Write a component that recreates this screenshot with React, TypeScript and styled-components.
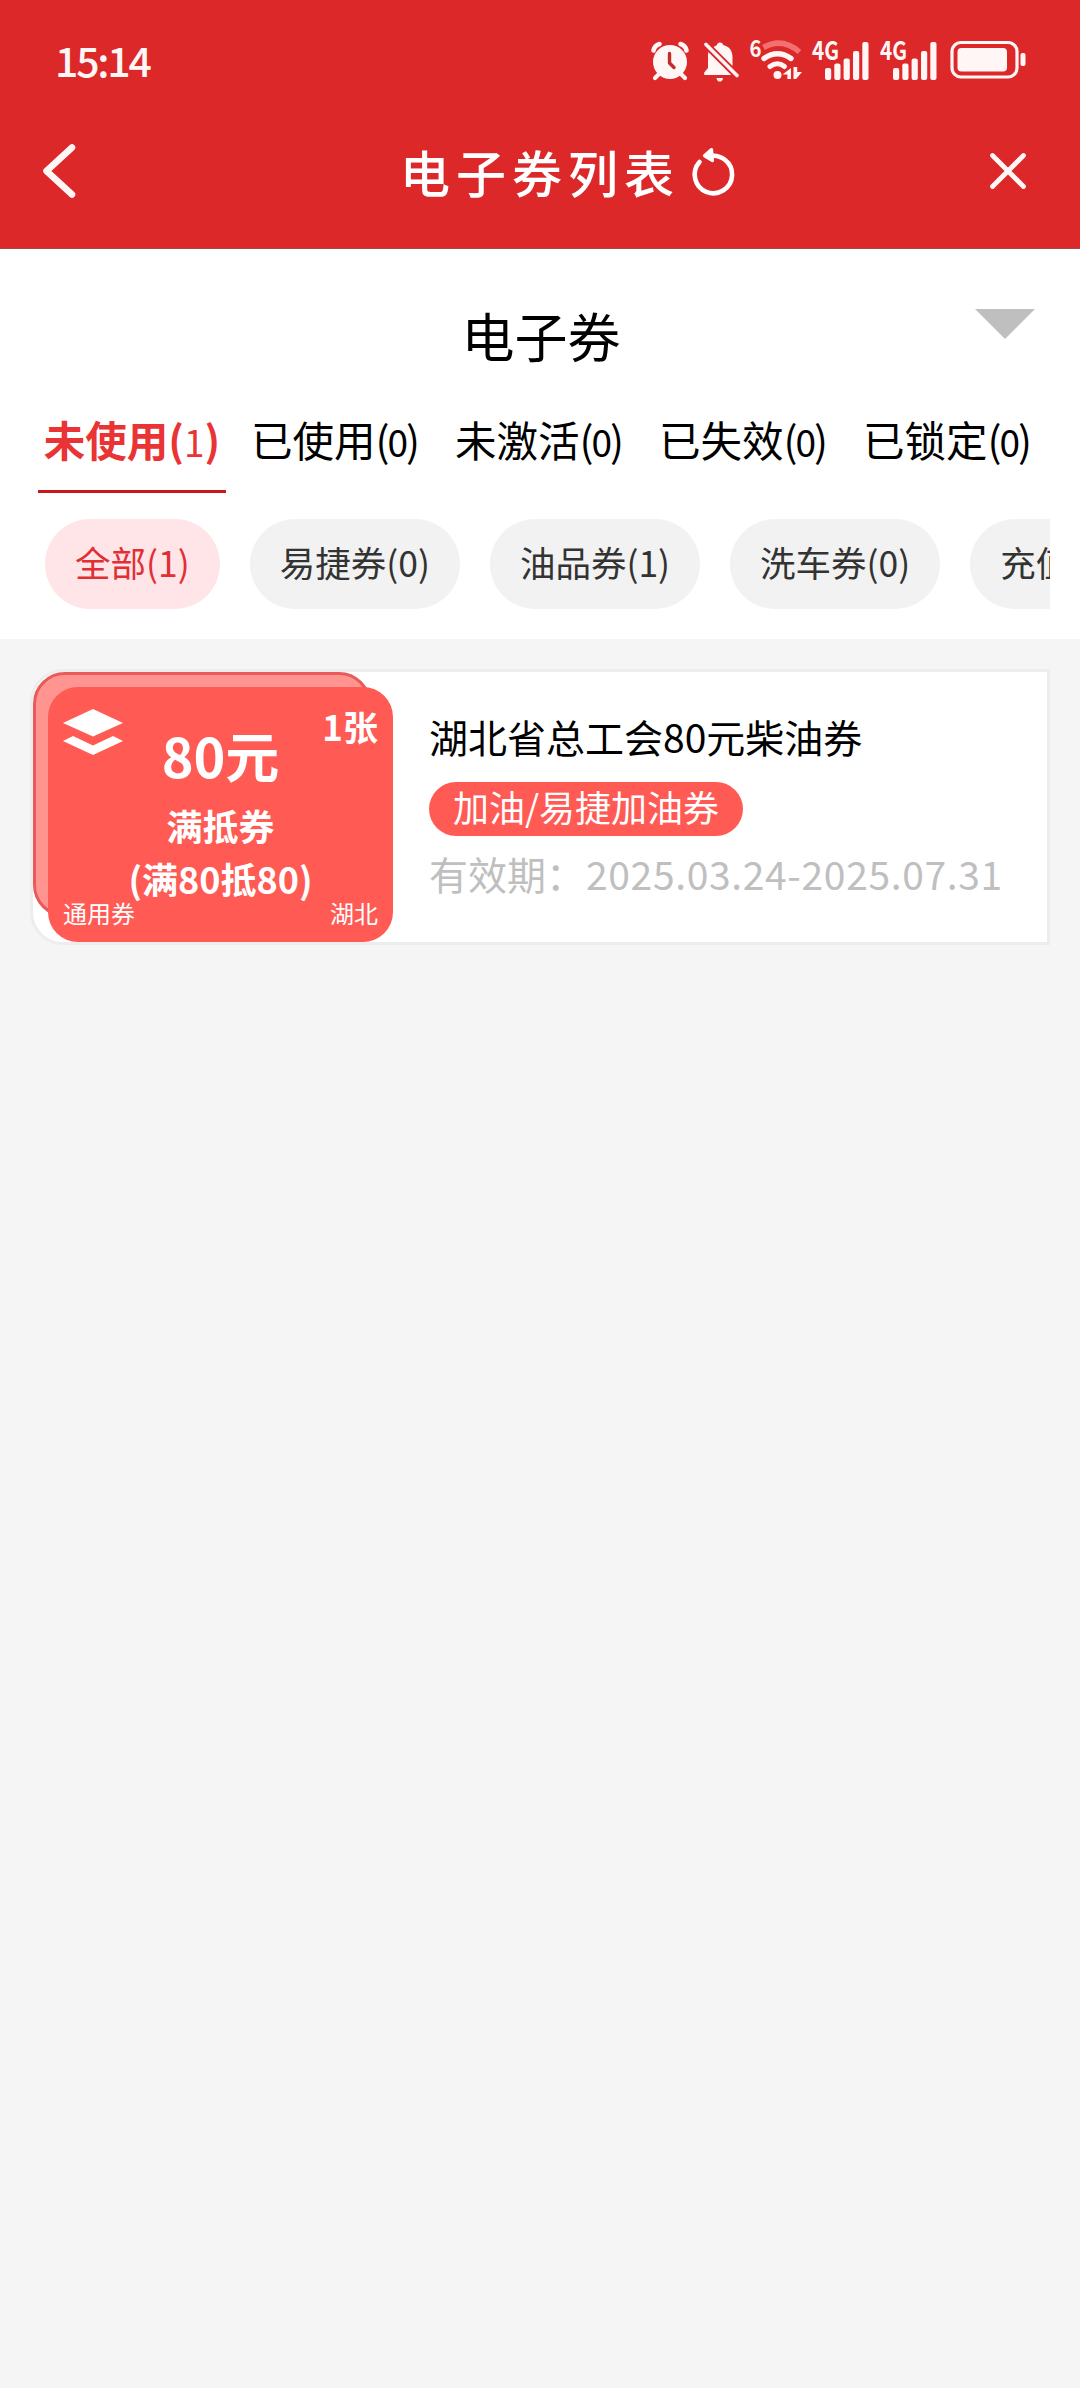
import React from "react";
import styled, { createGlobalStyle, css } from "styled-components";

const GlobalStyle = createGlobalStyle`
  * { box-sizing: border-box; }
  html, body { margin: 0; padding: 0; background: #f5f5f5; }
  body {
    font-family: "Noto Sans CJK SC", "Noto Sans", sans-serif;
    color: #000;
    -webkit-font-smoothing: antialiased;
  }
`;

const Page = styled.div`
  width: 1080px;
  min-height: 2388px;
  display: flex;
  flex-direction: column;
  background: #f5f5f5;
  overflow: hidden;
`;

const Header = styled.header`
  height: 249px;
  background: #dc2829;
  border-bottom: 1px solid #a5474a;
  color: #fff6f5;
  display: flex;
  flex-direction: column;
`;

const StatusBar = styled.div`
  height: 120px;
  padding: 2px 54px 0 55px;
  display: flex;
  align-items: center;
  justify-content: space-between;
`;

const Clock = styled.span`
  padding-bottom: 5px;
  font-size: 41px;
  line-height: 60px;
  font-weight: 500;
  letter-spacing: -2.2px;
`;

const StatusIcons = styled.div`
  display: flex;
  align-items: center;
`;

const Glyph = styled.svg<{ $w: number; $h: number; $ml?: number }>`
  display: block;
  flex: none;
  overflow: visible;
  width: ${(p) => p.$w}px;
  height: ${(p) => p.$h}px;
  margin-left: ${(p) => p.$ml ?? 0}px;
`;

const SignalText = styled.text`
  font-family: "Noto Sans CJK SC", sans-serif;
  font-weight: 700;
  fill: #fff6f5;
`;

const NavBar = styled.nav`
  height: 102px;
  padding: 0 53px 0 42px;
  display: grid;
  grid-template-columns: 120px 1fr 120px;
  align-items: center;
`;

const NavTitle = styled.h1`
  margin: 0;
  display: flex;
  align-items: center;
  justify-content: center;
  padding-left: 67px;
  font-family: KaiTi, STKaiti, "Noto Sans CJK SC", serif;
  font-size: 50px;
  line-height: 60px;
  font-weight: 500;
  letter-spacing: 6px;
  color: #fff;
`;

const NavEnd = styled.div`
  display: flex;
  justify-content: flex-end;
`;

const Filters = styled.section`
  height: 390px;
  background: #fff;
  display: flex;
  flex-direction: column;
`;

const Category = styled.div`
  height: 150px;
  padding: 22px 45px 0;
  display: grid;
  grid-template-columns: 60px 1fr 60px;
  align-items: center;
`;

const CategoryName = styled.h2`
  margin: 0;
  padding: 0 0 1px 2px;
  grid-column: 2;
  text-align: center;
  font-size: 53px;
  line-height: 64px;
  font-weight: 400;
`;

const Caret = styled.i`
  width: 0;
  height: 0;
  margin-bottom: 22px;
  border-left: 30px solid transparent;
  border-right: 30px solid transparent;
  border-top: 30px solid #bfbfbf;
`;

const Tabs = styled.div`
  height: 94px;
  padding-left: 38px;
  display: flex;
  gap: 35px;
`;

const Tab = styled.button<{ $active?: boolean }>`
  flex: none;
  width: 169px;
  height: 94px;
  padding: 0 0 12px;
  border: 0;
  background: none;
  font-family: inherit;
  font-size: 41.5px;
  line-height: 60px;
  color: #000;
  white-space: nowrap;
  ${(p) =>
    p.$active &&
    css`
      width: 188px;
      margin-right: -10px;
      padding-bottom: 9px;
      font-weight: 700;
      color: #e93334;
      border-bottom: 3px solid #c8171e;
    `}
`;

const Count = styled.span<{ $tight: boolean }>`
  margin: 0 ${(p) => (p.$tight ? -2 : 0)}px;
  font-size: 37px;
  font-weight: 400;
`;

const Pills = styled.div`
  margin: 26px 30px 0 45px;
  display: flex;
  gap: 30px;
  overflow: hidden;
`;

const Pill = styled.button<{ $active?: boolean }>`
  flex: none;
  height: 90px;
  padding: 0 30px 4px;
  border: 0;
  border-radius: 45px;
  font-family: inherit;
  font-size: 35.5px;
  line-height: 60px;
  white-space: nowrap;
  color: ${(p) => (p.$active ? "#e03036" : "#333")};
  background: ${(p) => (p.$active ? "#ffe5e7" : "#f2f2f2")};
`;

const List = styled.main`
  padding: 30px 30px 0;
`;

const Card = styled.article`
  height: 276px;
  border: 3px solid #ededed;
  border-radius: 33px 0 0 33px;
  background: #fff;
  display: flex;
`;

const Stack = styled.div`
  position: relative;
  width: 360px;
  height: 270px;
  padding: 15px 0 0 15px;
  flex: none;
`;

const StackShadow = styled.div`
  position: absolute;
  left: 0;
  top: 0;
  width: 338px;
  height: 245px;
  border: 3px solid #e95a5b;
  border-radius: 32px;
  background: #ff9490;
`;

const Coupon = styled.div`
  position: relative;
  width: 345px;
  height: 255px;
  padding: 15px 15px 0;
  border-radius: 30px;
  background: #ff5a53;
  color: #fff;
  display: grid;
  grid-template-rows: 97px 53px 49px 26px;
`;

const CouponTop = styled.div`
  display: grid;
  grid-template-columns: 60px 1fr 60px;
`;

const Amount = styled.strong`
  padding-top: 15px;
  text-align: center;
  font-size: 54px;
  line-height: 76px;
  font-weight: 700;
  white-space: nowrap;
`;

const Quantity = styled.strong`
  padding-top: 1px;
  display: flex;
  justify-content: flex-end;
  font-size: 35px;
  line-height: 46px;
  font-weight: 700;
  white-space: nowrap;
`;

const Rule = styled.strong`
  text-align: center;
  font-size: 36px;
  line-height: 52px;
  font-weight: 700;
  white-space: nowrap;
`;

const CouponFoot = styled.div`
  display: flex;
  justify-content: space-between;
  font-size: 24px;
  line-height: 24px;
`;

const Info = styled.div`
  padding: 34px 0 0 36px;
  display: flex;
  flex-direction: column;
  align-items: flex-start;
  white-space: nowrap;
`;

const Name = styled.h3`
  margin: 0;
  font-size: 39px;
  line-height: 60px;
  font-weight: 400;
`;

const Tag = styled.span`
  height: 54px;
  margin-top: 16px;
  padding: 0 24px;
  border-radius: 27px;
  background: #ff5a53;
  color: #fff;
  font-size: 36px;
  line-height: 48px;
`;

const Validity = styled.p`
  margin: 7px 0 0;
  font-size: 39px;
  line-height: 60px;
  color: #bfbfbf;
  display: flex;
`;

const Dates = styled.span`
  padding-left: 1px;
  letter-spacing: 0.65px;
`;

const ink = "#fff6f5";

const AlarmIcon = () => (
  <Glyph $w={38} $h={40} viewBox="0 0 38 40">
    <circle cx="19" cy="21" r="17" fill={ink} />
    <path d="M2.500 9.500Q3.500 4.500 8.500 3M29.500 3Q34.500 4.500 35.500 9.500" stroke={ink} strokeWidth="4.600" fill="none" strokeLinecap="round" />
    <path d="M8 33l-4 4M30 33l4 4" stroke={ink} strokeWidth="4.200" strokeLinecap="round" />
    <path d="M18.500 12.500v9.500l4.500 4.500" stroke="#c22b2c" strokeWidth="3.400" fill="none" strokeLinecap="round" strokeLinejoin="round" />
  </Glyph>
);

const BellOffIcon = () => (
  <Glyph $w={36} $h={41} $ml={14} viewBox="0 0 36 41">
    <path d="M17 1.500c1.800 0 3 1 3.200 2.500C26.500 5.500 29.500 10 29.500 16v9.500L10.500 6.500C11.500 5.200 13 4.400 14 4c.2-1.500 1.200-2.500 3-2.500z" fill={ink} />
    <path d="M5.500 11L28.500 34H1.200v-2.600L5 27V16c0-2 0-3.500.5-5z" fill={ink} />
    <path d="M13.500 37h6.500c-.4 2.600-1.600 3.600-3.200 3.600s-2.900-1-3.300-3.600z" fill={ink} />
    <path d="M3 3.500L34 34.500" stroke="#dc2829" strokeWidth="7" />
    <path d="M3 3.500L34 34.500" stroke={ink} strokeWidth="3.600" strokeLinecap="round" />
  </Glyph>
);

const WifiIcon = () => (
  <Glyph $w={52} $h={42} $ml={11} viewBox="0 0 52 42">
    <SignalText x="-0.5" y="17" fontSize="23" textLength="12" lengthAdjust="spacingAndGlyphs">6</SignalText>
    <path d="M13.500 7.500Q32 -3 49.500 12" stroke="#f2706f" strokeWidth="5.500" fill="none" strokeLinecap="butt" />
    <path d="M14 18.500Q27.500 9 41 18.500" stroke={ink} strokeWidth="5.400" fill="none" strokeLinecap="round" />
    <path d="M20 26.500Q27.500 21 34.500 26.500" stroke={ink} strokeWidth="5" fill="none" strokeLinecap="round" />
    <circle cx="27.500" cy="35" r="4" fill={ink} />
    <path d="M41 28v11h-3.600v-4.500h-4.900zM43.500 27v12h2.600L52 32h-4.800V27z" fill={ink} />
  </Glyph>
);

const SignalIcon = ({ gap }: { gap: number }) => (
  <Glyph $w={57} $h={42} $ml={gap} viewBox="0 0 57 42">
    <SignalText x="0" y="20" fontSize="26" textLength="27" lengthAdjust="spacingAndGlyphs">4G</SignalText>
    <g fill={ink}>
      <rect x="13" y="28" width="6.200" height="12" rx="2" />
      <rect x="22.300" y="23.500" width="6.200" height="16.500" rx="2" />
      <rect x="31.600" y="18.500" width="6.200" height="21.500" rx="2" />
      <rect x="41" y="11" width="6.200" height="29" rx="2" />
      <rect x="50.300" y="2" width="6.200" height="38" rx="2" />
    </g>
  </Glyph>
);

const BatteryIcon = () => (
  <Glyph $w={76} $h={42} $ml={13} viewBox="0 0 76 42">
    <rect x="2" y="2.500" width="65" height="34.500" rx="9" fill="none" stroke={ink} strokeWidth="3.200" />
    <rect x="7.500" y="8" width="49.500" height="23.500" rx="4" fill={ink} />
    <rect x="70.500" y="13" width="5" height="13" rx="2" fill={ink} />
  </Glyph>
);

const BackIcon = () => (
  <Glyph $w={36} $h={56} viewBox="0 0 36 56">
    <path d="M30 4.500L4.500 28L30 51.500" stroke="#fff6f5" strokeWidth="6.500" fill="none" strokeLinecap="round" strokeLinejoin="round" />
  </Glyph>
);

const ReloadIcon = () => (
  <Glyph $w={44} $h={50} $ml={12} viewBox="0 -1 44 50">
    <path d="M7.500 15A18.700 18.700 0 1 0 16 9.600" stroke="#fff" strokeWidth="4.600" fill="none" strokeLinecap="round" />
    <path d="M19.500 2.500L12.500 8.800L20.500 13.500Z" stroke="#fff" strokeWidth="3.200" fill="#fff" strokeLinecap="round" strokeLinejoin="round" />
  </Glyph>
);

const CloseIcon = () => (
  <Glyph $w={38} $h={38} viewBox="0 0 38 38">
    <path d="M3.500 3.500L34.500 34.500M34.500 3.500L3.500 34.500" stroke="#fff6f5" strokeWidth="4.800" strokeLinecap="round" />
  </Glyph>
);

const LayersIcon = () => (
  <Glyph $w={60} $h={54} viewBox="0 0 60 54">
    <path d="M30 7L60 21L30 34.500L0 21Z" fill="#fff" />
    <path d="M10 34L30 43.500L50 34L60 39L30 53L0 39Z" fill="#fff" />
  </Glyph>
);

const tabs = [
  { label: "未使用", count: 1 },
  { label: "已使用", count: 0 },
  { label: "未激活", count: 0 },
  { label: "已失效", count: 0 },
  { label: "已锁定", count: 0 },
];

const pills = ["全部(1)", "易捷券(0)", "油品券(1)", "洗车券(0)", "充值券(0)"];

export default function App() {
  return (
    <>
      <GlobalStyle />
      <Page>
        <Header>
          <StatusBar>
            <Clock>15:14</Clock>
            <StatusIcons>
              <AlarmIcon />
              <BellOffIcon />
              <WifiIcon />
              <SignalIcon gap={10} />
              <SignalIcon gap={11} />
              <BatteryIcon />
            </StatusIcons>
          </StatusBar>
          <NavBar>
            <BackIcon />
            <NavTitle>
              电子券列表
              <ReloadIcon />
            </NavTitle>
            <NavEnd>
              <CloseIcon />
            </NavEnd>
          </NavBar>
        </Header>
        <Filters>
          <Category>
            <CategoryName>电子券</CategoryName>
            <Caret />
          </Category>
          <Tabs>
            {tabs.map((t, i) => (
              <Tab key={t.label} $active={i === 0}>
                {t.label}(<Count $tight={i !== 0}>{t.count}</Count>)
              </Tab>
            ))}
          </Tabs>
          <Pills>
            {pills.map((p, i) => (
              <Pill key={p} $active={i === 0}>
                {p}
              </Pill>
            ))}
          </Pills>
        </Filters>
        <List>
          <Card>
            <Stack>
              <StackShadow />
              <Coupon>
                <CouponTop>
                  <LayersIcon />
                  <Amount>80元</Amount>
                  <Quantity>1张</Quantity>
                </CouponTop>
                <Rule>满抵券</Rule>
                <Rule>(满80抵80)</Rule>
                <CouponFoot>
                  <span>通用券</span>
                  <span>湖北</span>
                </CouponFoot>
              </Coupon>
            </Stack>
            <Info>
              <Name>湖北省总工会80元柴油券</Name>
              <Tag>加油/易捷加油券</Tag>
              <Validity>
                有效期：<Dates>2025.03.24-2025.07.31</Dates>
              </Validity>
            </Info>
          </Card>
        </List>
      </Page>
    </>
  );
}
